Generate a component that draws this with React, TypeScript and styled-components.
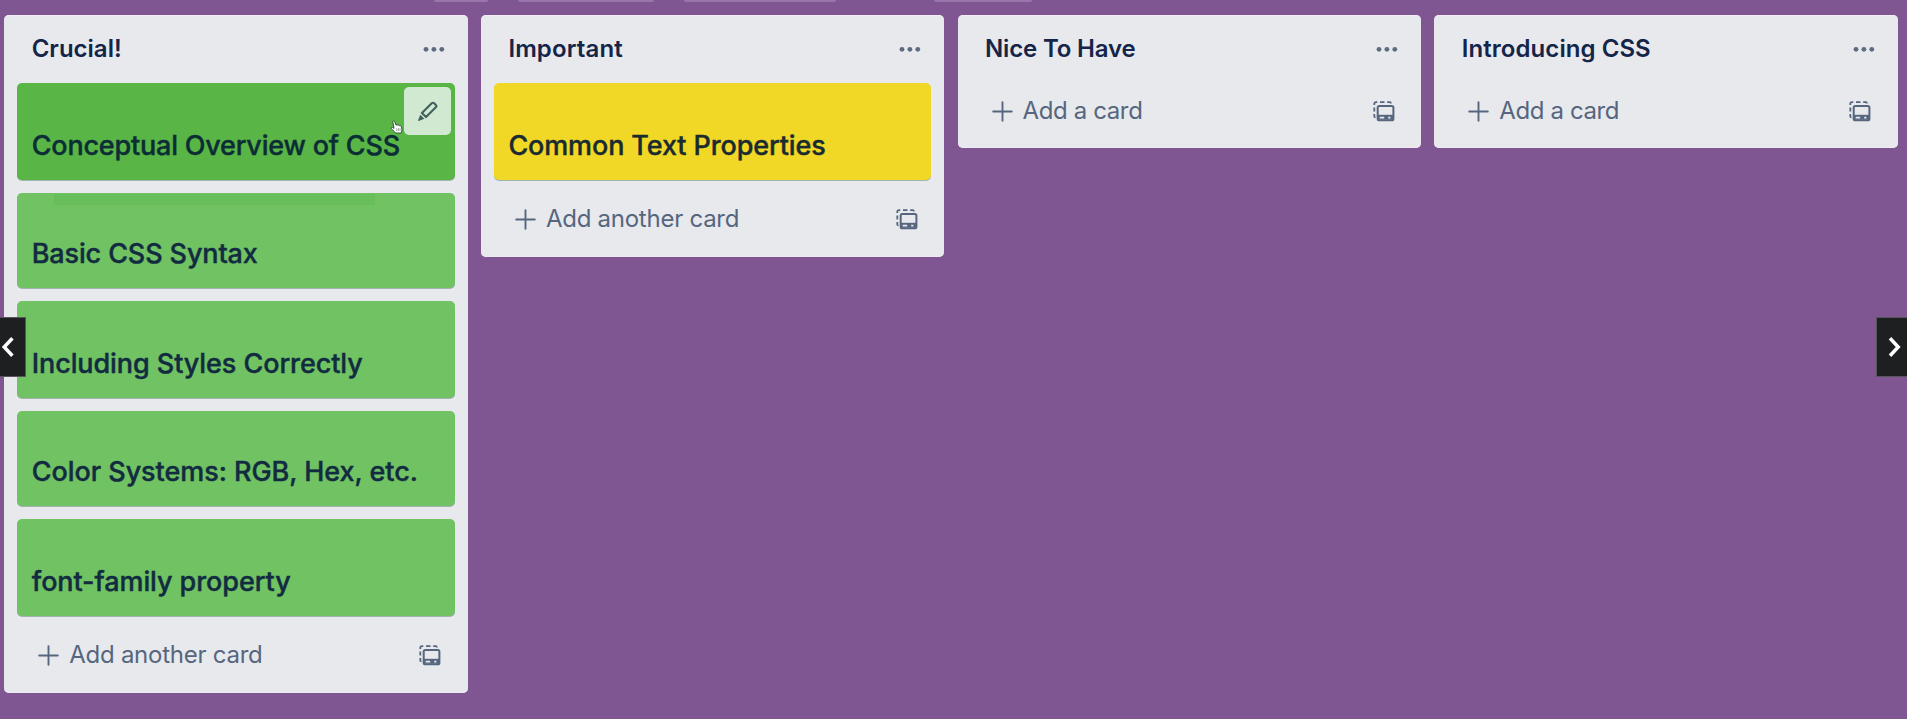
import React from "react";
import styled, { createGlobalStyle, css } from "styled-components";

const GlobalStyle = createGlobalStyle`
  *, *::before, *::after { box-sizing: border-box; }
  body { margin: 0; background: #7f5692; overflow: hidden; }
  button { border: 0; padding: 0; background: none; font: inherit; color: inherit; }
  svg { display: block; flex: none; }
`;

const Page = styled.div`
  position: relative;
  height: 719px;
  font-family: Inter, "Liberation Sans", sans-serif;
  background: #7f5692;
  overflow: hidden;
`;

const TopBar = styled.div`
  display: flex;
  height: 15px;
  padding-left: 434px;
`;

const BarButton = styled.div<{ $width: number; $gap: number }>`
  width: ${(p) => p.$width}px;
  height: 2.3px;
  margin-right: ${(p) => p.$gap}px;
  border-radius: 0 0 4px 4px;
  background: #9976aa;
`;

const Board = styled.main`
  display: flex;
  align-items: flex-start;
  gap: 13.2px;
  padding-left: 4.2px;
`;

const List = styled.section`
  flex: none;
  width: 463.5px;
  padding: 0 13px;
  border-radius: 5px;
  background: #e7e9ed;
  box-shadow: inset 0 1px 0 #f3ebf6, inset 0 -1px 0 #efe9f3;
`;

const ListHeader = styled.header`
  display: flex;
  align-items: center;
  justify-content: space-between;
  height: 68px;
  padding: 0 10px 0 14.5px;
  color: #5d6b81;
`;

const ListTitle = styled.h2<{ $tracking: number }>`
  margin: 0;
  font-size: 24px;
  line-height: 30px;
  font-weight: 600;
  letter-spacing: ${(p) => p.$tracking}px;
  color: #15254a;
`;

const Cards = styled.div`
  display: flex;
  flex-direction: column;
  gap: 13px;
  margin-bottom: 11px;
`;

type Tone = "green" | "active" | "yellow";
const tones: Record<Tone, { bg: string; ink: string }> = {
  green: { bg: "#70c263", ink: "#122b40" },
  active: { bg: "#59b545", ink: "#0c2d36" },
  yellow: { bg: "#f2d826", ink: "#1a2b30" },
};

const CardBox = styled.article<{ $tone: Tone; $short?: boolean; $shade?: boolean }>`
  position: relative;
  display: flex;
  align-items: flex-end;
  height: ${(p) => (p.$short ? 95 : 97)}px;
  padding: 0 14.5px 19px;
  border-radius: 5px;
  color: ${(p) => tones[p.$tone].ink};
  background: ${(p) => tones[p.$tone].bg};
  box-shadow: 0 1px 0 #a2b3ad;
  ${(p) =>
    p.$shade &&
    css`
      background: linear-gradient(#69be5c, #69be5c) 37px 1px / 321px 11px no-repeat, ${tones.green.bg};
    `}
`;

const CardTitle = styled.span<{ $tracking: number }>`
  font-size: 27px;
  line-height: 30px;
  font-weight: 500;
  letter-spacing: ${(p) => p.$tracking}px;
  white-space: nowrap;
  -webkit-text-stroke: 0.4px currentColor;
`;

const EditButton = styled.button`
  position: absolute;
  top: 4px;
  right: 4px;
  display: grid;
  place-items: center;
  width: 47px;
  height: 48px;
  border-radius: 5px;
  background: #d1e9d0;
  color: #42605f;
`;

const Pointer = styled.svg`
  position: absolute;
  top: 37px;
  right: 52px;
`;

const ListFooter = styled.footer<{ $roomy: boolean }>`
  display: flex;
  align-items: flex-start;
  justify-content: space-between;
  height: ${(p) => (p.$roomy ? 66 : 65)}px;
  padding: 13px 13.5px 0 21px;
  color: #56667e;
`;

const AddButton = styled.button<{ $tracking: number }>`
  display: flex;
  align-items: center;
  gap: 10px;
  font-size: 24px;
  line-height: 30px;
  letter-spacing: ${(p) => p.$tracking}px;
`;

const TemplateButton = styled.button`
  display: flex;
  align-items: center;
  height: 30px;
`;

const NavButton = styled.button<{ $side: "left" | "right" }>`
  position: absolute;
  top: 317px;
  ${(p) => (p.$side === "left" ? "left: 0; width: 26px;" : "right: 0; width: 31px;")}
  height: 60px;
  background: #1d1f20;
  border: 1px solid #58545b;
  ${(p) => (p.$side === "left" ? "border-left: 0;" : "border-right: 0;")}
`;

const Dots = () => (
  <svg width="22" height="6" viewBox="0 0 22 6" fill="currentColor">
    <circle cx="3" cy="3.3" r="2.4" />
    <circle cx="10.9" cy="3.3" r="2.4" />
    <circle cx="18.8" cy="3.3" r="2.4" />
  </svg>
);

const Plus = () => (
  <svg width="21" height="21" viewBox="0 0 21 21" stroke="currentColor" strokeWidth="1.9" strokeLinecap="round">
    <path d="M10.5 1.2V19.8M1.2 10.5H19.8" />
  </svg>
);

const Template = () => (
  <svg width="22" height="21" viewBox="0 0 22 21" fill="none" stroke="currentColor">
    <path
      d="M1.3 4V3Q1.3 1.2 3 1.2H4.3M7 1.2H11.5M14.2 1.2H16.7Q17.9 1.2 17.9 2.5M1.3 6.5V10.5M1.3 13V15.4Q1.3 16.3 2.5 16.3"
      strokeWidth="1.8"
    />
    <rect x="4.7" y="4.9" width="15.7" height="14.4" rx="1.6" strokeWidth="2" />
    <path d="M4.7 13.8H20.4V18.6H4.7Z" fill="currentColor" stroke="none" />
    <path d="M6.7 16.6H11.2M15.2 16.6H17.4" stroke="#e7e9ed" strokeWidth="1.6" />
  </svg>
);

const Pencil = () => (
  <svg width="21" height="21" viewBox="0 0 20 20" fill="none" stroke="currentColor" strokeWidth="2" strokeLinejoin="round">
    <path d="M4.7 11.5L14 2.2Q15.2 1.1 16.4 2.2L17.9 3.7Q19 4.9 17.9 6L8.6 15.3Z" />
    <path d="M3.1 13L7 16.9L2.2 18.9Q.7 19.4 1.2 17.9Z" fill="currentColor" stroke="none" />
  </svg>
);

const Hand = () => (
  <Pointer width="13" height="14" viewBox="0 0 13 14">
    <path
      d="M2.8 1.4Q3.8.2 4.7 1.5L6 5.1Q7 4.3 7.8 5.2Q8.8 4.6 9.5 5.7Q11 5.3 11.4 6.8L11.9 9.3Q12.1 11 11 13H5.5Q4.8 11.7 2.3 9.7Q.6 8 1.6 7.4Q2.5 7 4 8.4Z"
      fill="#fff"
      stroke="#30483a"
      strokeWidth=".9"
    />
    <path d="M6.7 8.3V11M8.4 8.2V11M10 8.2V10.8" stroke="#566" strokeWidth=".6" />
  </Pointer>
);

const Chevron = ({ side }: { side: "left" | "right" }) => (
  <svg width="26" height="58" viewBox="0 0 26 58" fill="none" stroke="#fff" strokeWidth="3.5">
    <path d={side === "left" ? "M12.4 20.3L4.2 29L12.4 37.7" : "M13 20.3L21.2 29L13 37.7"} />
  </svg>
);

type Card = { title: string; tone: Tone; tracking: number; short?: boolean; shade?: boolean };
type ListData = { title: string; tracking: number; cards: Card[] };

const lists: ListData[] = [
  {
    title: "Crucial!",
    tracking: 0,
    cards: [
      { title: "Conceptual Overview of CSS", tone: "active", tracking: -0.2 },
      { title: "Basic CSS Syntax", tone: "green", tracking: -0.12, short: true, shade: true },
      { title: "Including Styles Correctly", tone: "green", tracking: -0.08 },
      { title: "Color Systems: RGB, Hex, etc.", tone: "green", tracking: -0.05, short: true },
      { title: "font-family property", tone: "green", tracking: -0.08 },
    ],
  },
  {
    title: "Important",
    tracking: 0.12,
    cards: [{ title: "Common Text Properties", tone: "yellow", tracking: -0.12 }],
  },
  { title: "Nice To Have", tracking: -0.17, cards: [] },
  { title: "Introducing CSS", tracking: 0.07, cards: [] },
];

export default function App() {
  return (
    <Page>
      <GlobalStyle />
      <TopBar>
        <BarButton $width={54} $gap={30} />
        <BarButton $width={136} $gap={30} />
        <BarButton $width={152} $gap={98} />
        <BarButton $width={98} $gap={0} />
      </TopBar>
      <Board>
        {lists.map((list) => (
          <List key={list.title}>
            <ListHeader>
              <ListTitle $tracking={list.tracking}>{list.title}</ListTitle>
              <Dots />
            </ListHeader>
            {list.cards.length > 0 && (
              <Cards>
                {list.cards.map((card) => (
                  <CardBox key={card.title} $tone={card.tone} $short={card.short} $shade={card.shade}>
                    <CardTitle $tracking={card.tracking}>{card.title}</CardTitle>
                    {card.tone === "active" && (
                      <>
                        <EditButton aria-label="Edit card">
                          <Pencil />
                        </EditButton>
                        <Hand />
                      </>
                    )}
                  </CardBox>
                ))}
              </Cards>
            )}
            <ListFooter $roomy={list.cards.length > 0}>
              <AddButton $tracking={list.cards.length ? -0.25 : -0.38}>
                <Plus />
                {list.cards.length ? "Add another card" : "Add a card"}
              </AddButton>
              <TemplateButton aria-label="Create from template">
                <Template />
              </TemplateButton>
            </ListFooter>
          </List>
        ))}
      </Board>
      <NavButton $side="left" aria-label="Previous">
        <Chevron side="left" />
      </NavButton>
      <NavButton $side="right" aria-label="Next">
        <Chevron side="right" />
      </NavButton>
    </Page>
  );
}
